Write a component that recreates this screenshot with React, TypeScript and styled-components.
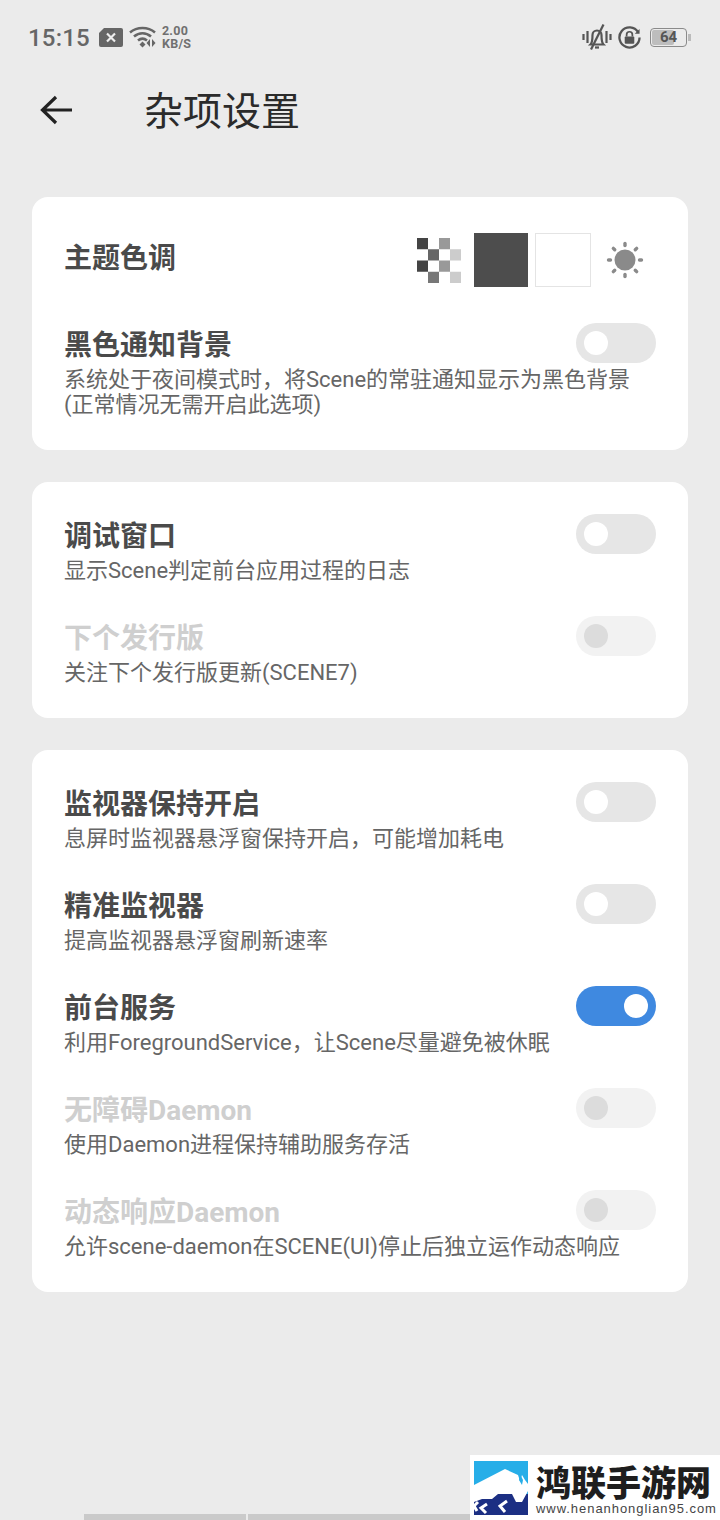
import React from "react";
import styled, { createGlobalStyle } from "styled-components";

const Global = createGlobalStyle`
  html, body { margin: 0; padding: 0; background: #ebebeb; }
  body { font-family: Roboto, "Noto Sans CJK SC", sans-serif; }
`;

const Page = styled.div`
  width: 720px;
  height: 1520px;
  background: #ebebeb;
  display: flex;
  flex-direction: column;
  overflow: hidden;
`;

const StatusBar = styled.div`
  height: 26px;
  margin-top: 24px;
  padding: 0 29px 0 28px;
  display: flex;
  align-items: center;
  color: #666;
`;

const Time = styled.span`
  font-size: 24px;
  font-weight: 500;
  letter-spacing: 0.2px;
  line-height: 26px;
  margin: 2px 9px 0 0;
`;

const Speed = styled.span`
  display: flex;
  flex-direction: column;
  font-size: 12.5px;
  font-weight: 700;
  line-height: 13px;
  color: #707070;
  margin-left: 3px;
  letter-spacing: 0.3px;
`;

const StatusRight = styled.div`
  margin-left: auto;
  display: flex;
  align-items: center;
  gap: 6px;
`;

const Battery = styled.div`
  width: 37px;
  height: 19px;
  box-sizing: border-box;
  border: 1.5px solid #8a8a8a;
  border-radius: 4px;
  padding: 1px;
  position: relative;
  display: flex;
  margin-left: 3px;
`;

const BatteryFill = styled.div`
  height: 100%;
  background: #bdbdbd;
  border-radius: 2px;
  width: 66%;
`;

const BatteryLabel = styled.span`
  position: absolute;
  inset: 0;
  display: flex;
  align-items: center;
  justify-content: center;
  font-size: 15px;
  font-weight: 700;
  color: #555;
`;

const BatteryTip = styled.div`
  width: 3px;
  height: 7px;
  background: #bbb;
  margin-left: -5px;
`;

const Header = styled.header`
  height: 60px;
  margin-top: 30px;
  padding-left: 40px;
  display: flex;
  align-items: center;
`;

const Title = styled.h1`
  margin: 4px 0 0 72px;
  font-size: 39px;
  font-weight: 400;
  line-height: 60px;
  color: #2b2b2b;
`;

const Cards = styled.main`
  margin-top: 57px;
  padding: 0 32px;
  display: flex;
  flex-direction: column;
  gap: 32px;
`;

const Card = styled.section`
  background: #fff;
  border-radius: 16px;
  padding: 32px 32px 33px 32px;
  display: flex;
  flex-direction: column;
`;

const ThemeRow = styled.div`
  height: 60px;
  margin-bottom: 34px;
  display: flex;
  align-items: center;
`;

const RowTitle = styled.div<{ $disabled?: boolean }>`
  font-size: 28px;
  font-weight: 700;
  line-height: 46px;
  height: 46px;
  color: ${(p) => (p.$disabled ? "#cfcfcf" : "#4a4a4a")};
`;

const Swatch = styled.div<{ $color: string; $w: number; $border?: boolean }>`
  width: ${(p) => p.$w}px;
  height: 54px;
  box-sizing: border-box;
  background: ${(p) => p.$color};
  border: ${(p) => (p.$border ? "1px solid #e4e4e4" : "none")};
`;

const ThemeIcons = styled.div`
  margin: 2px 11px 0 auto;
  display: flex;
  align-items: center;
  gap: 7px;
`;

const CheckerIcon = styled.svg`
  margin-right: 6px;
`;

const SunIcon = styled.svg`
  margin-left: 7px;
`;

const Row = styled.div`
  display: flex;
  flex-direction: column;
  & + & {
    margin-top: 33px;
  }
`;

const RowHead = styled.div`
  display: flex;
  justify-content: space-between;
  align-items: flex-start;
`;

const RowSub = styled.div`
  font-size: 22px;
  line-height: 25px;
  color: #666;
  margin-top: -2px;
  white-space: pre-line;
`;

const Track = styled.div<{ $on?: boolean; $disabled?: boolean }>`
  width: 80px;
  height: 40px;
  flex: none;
  border-radius: 20px;
  box-sizing: border-box;
  padding: 8px;
  display: flex;
  justify-content: ${(p) => (p.$on ? "flex-end" : "flex-start")};
  background: ${(p) => (p.$on ? "#3f89e0" : p.$disabled ? "#f2f2f2" : "#e6e6e6")};
`;

const Thumb = styled.div<{ $disabled?: boolean }>`
  width: 24px;
  height: 24px;
  border-radius: 50%;
  background: ${(p) => (p.$disabled ? "#dcdcdc" : "#fff")};
`;

const Footer = styled.footer`
  margin-top: auto;
  display: flex;
  align-items: flex-end;
  padding-left: 84px;
`;

const NavBar = styled.div<{ $w: number }>`
  width: ${(p) => p.$w}px;
  flex: none;
  height: 6px;
  background: #cacaca;
  & + & {
    margin-left: 2px;
  }
`;

const Watermark = styled.div`
  flex: none;
  width: 250px;
  height: 65px;
  box-sizing: border-box;
  background: #fff;
  padding: 6px 0 0 4px;
  display: flex;
  gap: 8px;
`;

const WmText = styled.div`
  display: flex;
  flex-direction: column;
`;

const WmName = styled.div`
  font-family: "Noto Sans CJK SC", sans-serif;
  font-weight: 900;
  font-size: 35px;
  line-height: 40px;
  color: #1e1e1e;
  white-space: nowrap;
`;

const WmUrl = styled.div`
  font-family: "Liberation Sans", sans-serif;
  font-size: 13px;
  line-height: 14px;
  letter-spacing: 0.95px;
  color: #444;
  white-space: nowrap;
  margin-top: 1px;
`;

const Toggle = ({ on, disabled }: { on?: boolean; disabled?: boolean }) => (
  <Track $on={on} $disabled={disabled}>
    <Thumb $disabled={disabled} />
  </Track>
);

const Setting = ({
  title,
  sub,
  on,
  disabled,
}: {
  title: string;
  sub: string;
  on?: boolean;
  disabled?: boolean;
}) => (
  <Row>
    <RowHead>
      <RowTitle $disabled={disabled}>{title}</RowTitle>
      <Toggle on={on} disabled={disabled} />
    </RowHead>
    <RowSub>{sub}</RowSub>
  </Row>
);

const checker: [number, number, string][] = [
  [0, 0, "#444"],
  [2, 0, "#999"],
  [1, 1, "#666"],
  [3, 1, "#ccc"],
  [0, 2, "#444"],
  [2, 2, "#999"],
  [1, 3, "#777"],
  [3, 3, "#ccc"],
];

const rays = [0, 45, 90, 135, 180, 225, 270, 315];

export default function App() {
  return (
    <Page>
      <Global />
      <StatusBar>
        <Time>15:15</Time>
        <svg width="24" height="19" viewBox="0 0 24 19">
          <path d="M5 0H22a2 2 0 0 1 2 2V17a2 2 0 0 1-2 2H2a2 2 0 0 1-2-2V5Z" fill="#666" />
          <path d="M8 5.500l8 8M16 5.500l-8 8" stroke="#eee" strokeWidth="2.200" />
        </svg>
        <svg width="30" height="22" viewBox="0 0 30 22" style={{ marginLeft: 6 }}>
          <g fill="none" stroke="#666" strokeWidth="2.500">
            <path d="M1 6.500C8 0.500 19 0.500 26 6.500" />
            <path d="M5 10.500C10 6 17 6 22 10.500" />
            <path d="M9 14.500C12 12 15 12 18 14.500" />
          </g>
          <path d="M13.500 15.500l3 3-3 3-3-3Z" fill="#666" />
          <path d="M21 13v8l-3.500-4ZM23 13v8l3.500-4Z" fill="#666" />
        </svg>
        <Speed>
          <span>2.00</span>
          <span>KB/S</span>
        </Speed>
        <StatusRight>
          <svg width="30" height="26" viewBox="0 0 30 26">
            <g fill="none" stroke="#555" strokeWidth="2.200">
              <path d="M1.500 10v6M5.500 7v12M24.500 7v12M28.500 10v6" />
              <path d="M8.500 20.500c2-2 2-5 2-9.500a4.500 4.500 0 0 1 9 0c0 4.500 0 7.500 2 9.500Z" />
              <path d="M21.500 0.500L9 25.500" />
              <path d="M13 23.500h4" />
            </g>
          </svg>
          <svg width="23" height="23" viewBox="0 0 24 24">
            <path d="M21 6.500A10.500 10.500 0 1 0 22.500 12" fill="none" stroke="#555" strokeWidth="2.400" />
            <path d="M22.500 3v5h-5Z" fill="#555" />
            <rect x="7" y="11" width="10" height="7.500" rx="1" fill="#555" />
            <path d="M9 11V9a3 3 0 0 1 6 0v2" fill="none" stroke="#555" strokeWidth="1.800" />
          </svg>
          <Battery>
            <BatteryFill />
            <BatteryLabel>64</BatteryLabel>
          </Battery>
          <BatteryTip />
        </StatusRight>
      </StatusBar>

      <Header>
        <svg width="32" height="32" viewBox="0 0 32 32">
          <path d="M32 16H3M16 3L2.500 16 16 29" fill="none" stroke="#222" strokeWidth="3.200" />
        </svg>
        <Title>杂项设置</Title>
      </Header>

      <Cards>
        <Card>
          <ThemeRow>
            <RowTitle>主题色调</RowTitle>
            <ThemeIcons>
              <CheckerIcon width="44" height="45" viewBox="0 0 44 45">
                {checker.map(([c, r, f]) => (
                  <rect key={`${c}-${r}`} x={c * 11} y={r * 11.25} width="11" height="11.250" fill={f} />
                ))}
              </CheckerIcon>
              <Swatch $color="#4d4d4d" $w={54} />
              <Swatch $color="#fff" $w={56} $border />
              <SunIcon width="40" height="40" viewBox="0 0 40 40">
                <circle cx="20" cy="20" r="10.500" fill="#8a8a8a" />
                {rays.map((a) => (
                  <line
                    key={a}
                    x1="20"
                    y1="3.500"
                    x2="20"
                    y2="5.500"
                    stroke="#8a8a8a"
                    strokeWidth="3.400"
                    strokeLinecap="round"
                    transform={`rotate(${a} 20 20)`}
                  />
                ))}
              </SunIcon>
            </ThemeIcons>
          </ThemeRow>
          <Setting
            title="黑色通知背景"
            sub={"系统处于夜间模式时，将Scene的常驻通知显示为黑色背景\n(正常情况无需开启此选项)"}
          />
        </Card>

        <Card>
          <Setting title="调试窗口" sub="显示Scene判定前台应用过程的日志" />
          <Setting title="下个发行版" sub="关注下个发行版更新(SCENE7)" disabled />
        </Card>

        <Card>
          <Setting title="监视器保持开启" sub="息屏时监视器悬浮窗保持开启，可能增加耗电" />
          <Setting title="精准监视器" sub="提高监视器悬浮窗刷新速率" />
          <Setting title="前台服务" sub="利用ForegroundService，让Scene尽量避免被休眠" on />
          <Setting title="无障碍Daemon" sub="使用Daemon进程保持辅助服务存活" disabled />
          <Setting title="动态响应Daemon" sub="允许scene-daemon在SCENE(UI)停止后独立运作动态响应" disabled />
        </Card>
      </Cards>

      <Footer>
        <NavBar $w={162} />
        <NavBar $w={222} />
        <Watermark>
          <svg width="54" height="54" viewBox="0 0 54 54">
            <rect width="54" height="54" fill="#27aee8" />
            <rect y="33" width="54" height="21" fill="#1c2f83" />
            <path d="M0 24L31 8l13 6 2 6 2-6 3 5 3 4v7l-6 11h-6l-4-8H24l-6 5H8l-8 3Z" fill="#fff" />
            <path d="M46 13l3 6-1 5-3-5Z" fill="#27aee8" />
            <path d="M13 43l-6 4 5 5M4 41l-4 4 3 5M33 40l-7 5 5 6" fill="none" stroke="#fff" strokeWidth="3" />
          </svg>
          <WmText>
            <WmName>鸿联手游网</WmName>
            <WmUrl>www.henanhonglian95.com</WmUrl>
          </WmText>
        </Watermark>
      </Footer>
    </Page>
  );
}
